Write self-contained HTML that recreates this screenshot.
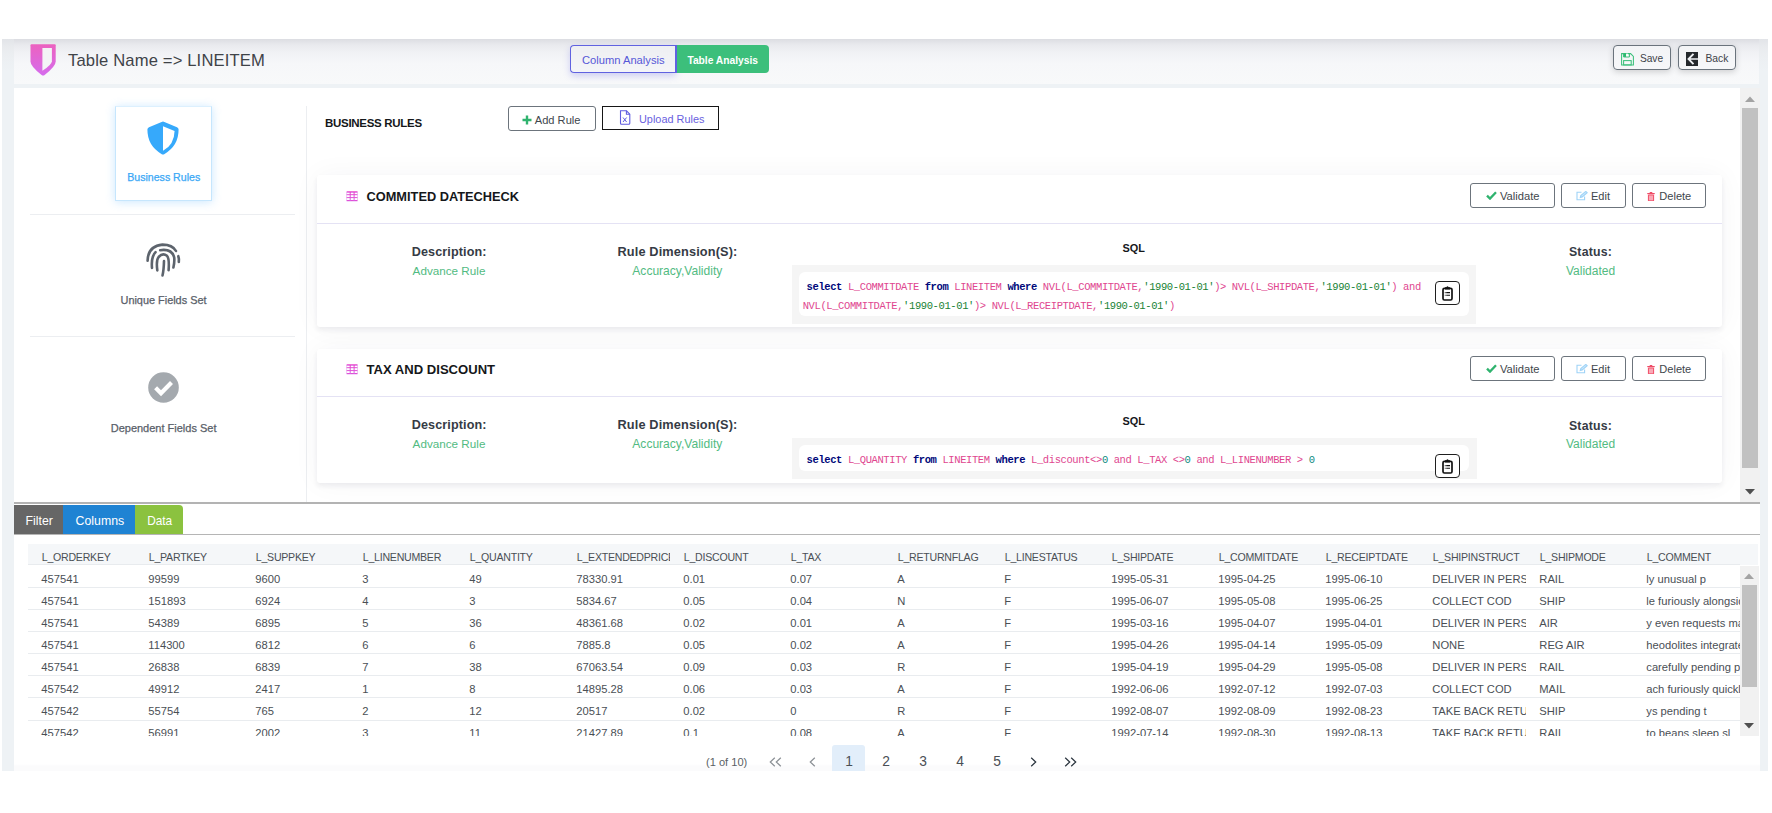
<!DOCTYPE html>
<html><head><meta charset="utf-8">
<style>
*{box-sizing:border-box;margin:0;padding:0}
html,body{width:1772px;height:813px;overflow:hidden;background:#fff;font-family:"Liberation Sans",sans-serif;color:#333}
.a{position:absolute}
.t{position:absolute;white-space:nowrap;line-height:1}
.k{color:#00087a;font-weight:bold}
.s{color:#178234}
.n{color:#0b8a80}
</style></head><body>
<div class="a" style="left:2.00px;top:39.00px;width:1766.00px;height:732.00px;background:linear-gradient(#e2e4e8 0px,#e9ebee 8px,#eceff2 18px,#eef2f5 32px,#eef2f5 100%)"></div>
<div class="a" style="left:14.00px;top:39.00px;width:1745.00px;height:45.00px;background:linear-gradient(#dcdde2 0px,#e9eaee 6px,#f1f2f5 14px,#f6f7f9 24px,#f8f9fa 100%)"></div>
<svg class="a" style="left:29px;top:44px" width="28" height="32" viewBox="0 0 28 32">
<defs><linearGradient id="pg" x1="0" y1="0" x2="0" y2="1"><stop offset="0" stop-color="#ec62bf"/><stop offset="1" stop-color="#d56ced"/></linearGradient></defs>
<path d="M1.5 1.2 Q1.5 0.3 2.4 0.3 H25.8 Q26.7 0.3 26.7 1.2 V17.5 Q26.7 22.5 15.6 30.9 Q14.1 32 12.6 30.9 Q1.5 22.5 1.5 17.5 Z" fill="url(#pg)"/>
<path d="M13.4 4 H22.9 V17.2 Q22.9 20.5 13.4 26.8 Z" fill="#f3f4f6"/>
</svg>
<div class="t" style="top:53px;font-size:16.6px;color:#3f4348;letter-spacing:0.15px;left:68.00px;">Table Name =&gt; LINEITEM</div>
<div class="a" style="left:570.00px;top:44.70px;width:106.00px;height:28.60px;border:1.6px solid #6062e0;border-right:none;border-radius:4px 0 0 4px;background:linear-gradient(#eeeff2,#f4f5f8);box-shadow:0 3px 7px rgba(96,98,224,.28)"></div>
<div class="a" style="left:676.00px;top:44.70px;width:93.00px;height:28.60px;background:#3cbf7b;border-radius:0 4px 4px 0"></div>
<div class="a" style="left:675.00px;top:44.70px;width:1.60px;height:28.60px;background:#6062e0"></div>
<div class="t" style="top:55px;font-size:11.2px;color:#5658d8;left:581.90px;">Column Analysis</div>
<div class="t" style="top:56px;font-size:10.25px;color:#ffffff;font-weight:bold;left:687.40px;">Table Analysis</div>
<div class="a" style="left:1612.60px;top:44.60px;width:58.10px;height:25.80px;border:1.6px solid #6a737c;border-radius:4px;background:linear-gradient(#f3f4f6,#f6f7f9);box-shadow:0 2px 6px rgba(0,0,0,.16)"></div>
<div class="a" style="left:1678.00px;top:44.60px;width:58.00px;height:25.80px;border:1.6px solid #6a737c;border-radius:4px;background:linear-gradient(#f3f4f6,#f6f7f9);box-shadow:0 2px 6px rgba(0,0,0,.16)"></div>
<svg class="a" style="left:1620.5px;top:53px" width="13" height="12.5" viewBox="0 0 13 12.5">
<path d="M0.6 0.6 H9.6 L12.4 3.4 V11.9 H0.6 Z" fill="none" stroke="#3cc07c" stroke-width="1.05"/>
<rect x="2.6" y="0.6" width="2.6" height="3.4" fill="#2eb86f"/>
<rect x="5.2" y="0.6" width="1.6" height="3.4" fill="#ffffff"/>
<path d="M2.6 0.6 V4 H8.4 V0.6" fill="none" stroke="#3cc07c" stroke-width="1"/>
<rect x="2.6" y="7.6" width="7.6" height="4.3" fill="none" stroke="#3cc07c" stroke-width="1.05"/>
</svg>
<div class="t" style="top:54px;font-size:10.2px;color:#3d4349;left:1639.90px;">Save</div>
<svg class="a" style="left:1686px;top:52px" width="12.5" height="14" viewBox="0 0 12.5 14">
<rect x="0" y="0" width="12" height="14" fill="#25292d"/>
<path d="M6.8 1.2 L1.2 7 L6.8 12.8 L8.2 11.6 L4.6 7.8 H12 V6.2 H4.6 L8.2 2.4 Z" fill="#eef0f3"/>
</svg>
<div class="t" style="top:54px;font-size:10.3px;color:#3d4349;left:1705.50px;">Back</div>
<div class="a" style="left:14.00px;top:88.00px;width:1726.00px;height:415.00px;background:#fff"></div>
<div class="a" style="left:114.80px;top:105.60px;width:97.20px;height:95.20px;border:1px solid #c6e6fd;border-top-color:#dcf0fe;background:#fff;box-shadow:0 1px 9px rgba(90,180,255,.32)"></div>
<svg class="a" style="left:147px;top:120.5px" width="32" height="34" viewBox="0 0 32 34">
<path d="M16 0.6 Q16.7 0.6 17.4 0.9 L30 6.2 Q31.6 6.9 31.6 8.6 Q31.6 25 17.2 33.2 Q16 33.8 14.8 33.2 Q0.4 25 0.4 8.6 Q0.4 6.9 2 6.2 L14.6 0.9 Q15.3 0.6 16 0.6 Z" fill="#36a9fb"/>
<path d="M16 5.2 L27.6 10 Q27.2 24 16 29.8 Z" fill="#fff"/>
</svg>
<div class="t" style="top:172px;font-size:10.6px;color:#3aa8f6;left:-136.30px;width:600px;text-align:center;-webkit-text-stroke:0.25px #3aa8f6">Business Rules</div>
<div class="a" style="left:30.00px;top:213.50px;width:265.00px;height:1.30px;background:#eceef1"></div>
<svg class="a" style="left:145px;top:242px" width="36" height="36" viewBox="0 0 36 36" fill="none" stroke="#5d646d" stroke-width="2.6" stroke-linecap="round">
<path d="M2.6 18.6 Q3 4 17.5 2.6 Q27.5 2.6 31 9"/>
<path d="M33.3 14.2 Q34.2 16.5 33.8 20"/>
<path d="M7 26 Q6.4 19 7.8 15 Q9 11.5 10.5 10.2"/>
<path d="M15.2 8.2 Q27 6.5 29.2 15.5 Q29.7 20 28.4 25.5"/>
<path d="M12.3 28.4 Q11 18 13.6 15 Q17.7 10.5 22 13.8 Q24.5 16.5 23.6 28.2"/>
<path d="M17.5 33.5 Q18.8 28 19 19"/>
</svg>
<div class="t" style="top:295px;font-size:10.9px;color:#596069;left:-136.50px;width:600px;text-align:center;-webkit-text-stroke:0.25px #596069">Unique Fields Set</div>
<div class="a" style="left:30.00px;top:336.00px;width:265.00px;height:1.30px;background:#eceef1"></div>
<svg class="a" style="left:148px;top:371.5px" width="31" height="31" viewBox="0 0 31 31">
<circle cx="15.5" cy="15.5" r="15.3" fill="#a4a9ae"/>
<path d="M7.6 15.8 L13 21.2 L23.5 10.6" fill="none" stroke="#fff" stroke-width="4.2" stroke-linejoin="miter"/>
</svg>
<div class="t" style="top:423px;font-size:11.0px;color:#596069;left:-136.40px;width:600px;text-align:center;-webkit-text-stroke:0.25px #596069">Dependent Fields Set</div>
<div class="a" style="left:306.20px;top:106.00px;width:1.20px;height:397.00px;background:#eceef1"></div>
<div class="t" style="top:118px;font-size:11.5px;color:#15171a;font-weight:bold;letter-spacing:-0.3px;left:325.00px;">BUSINESS RULES</div>
<div class="a" style="left:507.50px;top:106.10px;width:88.20px;height:24.50px;border:1.4px solid #6c747c;border-radius:3px;background:#fff"></div>
<svg class="a" style="left:522px;top:115px" width="10" height="10" viewBox="0 0 10 10"><path d="M5 0.5 V9.5 M0.5 5 H9.5" stroke="#2fb36e" stroke-width="2.4"/></svg>
<div class="t" style="top:115px;font-size:11.1px;color:#40464c;left:534.80px;">Add Rule</div>
<div class="a" style="left:602.30px;top:105.80px;width:116.70px;height:24.20px;border:1.7px solid #161616;background:#fff"></div>
<svg class="a" style="left:618.5px;top:110px" width="12" height="15" viewBox="0 0 12 15" fill="none" stroke="#5f5ce0" stroke-width="1.1"><path d="M1.5 0.8 H7.5 L10.8 4.2 V13.2 Q10.8 14.2 9.8 14.2 H2.5 Q1.5 14.2 1.5 13.2 Z"/><path d="M7.4 0.8 V4.3 H10.8"/><path d="M4 7.5 L7.6 12 M7.6 7.5 L4 12" stroke-width="1"/></svg>
<div class="t" style="top:114px;font-size:10.9px;color:#6a5fe0;left:639.00px;">Upload Rules</div>
<div class="a" style="left:317.00px;top:175.00px;width:1405.00px;height:152.00px;background:#fff;border-radius:3px;box-shadow:0 3px 5px rgba(40,40,70,.075),0 0 28px rgba(40,40,80,.045)"></div>
<div class="a" style="left:317.00px;top:223.00px;width:1405.00px;height:1.20px;background:#e4e2f4"></div>
<svg class="a" style="left:345.5px;top:190.7px" width="12.5" height="11" viewBox="0 0 12.5 11">
<defs><linearGradient id="tg190" x1="0" y1="0" x2="0" y2="1"><stop offset="0" stop-color="#ea3cc6"/><stop offset="1" stop-color="#d46ae9"/></linearGradient></defs>
<g fill="url(#tg190)">
<rect x="0.5" y="0.3" width="11.2" height="1.5" rx="0.6"/>
<rect x="0.5" y="3.2" width="11.2" height="1.0"/>
<rect x="0.5" y="6.1" width="11.2" height="1.0"/>
<rect x="0.5" y="9.0" width="11.2" height="1.2" rx="0.5"/>
<rect x="3.7" y="1" width="1" height="9"/>
<rect x="7.6" y="1" width="1" height="9"/>
</g>
<g fill="#e6a4ee" opacity="0.75"><rect x="0.3" y="1" width="0.8" height="8.8"/><rect x="11.1" y="1" width="0.8" height="8.8"/></g>
</svg>
<div class="t" style="top:191px;font-size:12.8px;color:#15171a;font-weight:bold;left:366.50px;">COMMITED DATECHECK</div>
<div class="a" style="left:1470.40px;top:183.40px;width:84.40px;height:24.40px;border:1.4px solid #6c747c;border-radius:3px;background:#fff"></div>
<div class="a" style="left:1561.30px;top:183.40px;width:64.30px;height:24.40px;border:1.4px solid #6c747c;border-radius:3px;background:#fff"></div>
<div class="a" style="left:1632.20px;top:183.40px;width:74.30px;height:24.40px;border:1.4px solid #6c747c;border-radius:3px;background:#fff"></div>
<svg class="a" style="left:1485.5px;top:191.20px" width="11" height="9" viewBox="0 0 11 9"><path d="M1 4.6 L4 7.6 L10 1.2" fill="none" stroke="#2fb36e" stroke-width="2.3"/></svg>
<div class="t" style="top:191px;font-size:11.2px;color:#40464c;left:1499.90px;">Validate</div>
<svg class="a" style="left:1576px;top:191.20px" width="12" height="9.5" viewBox="0 0 12 9.5" fill="none" stroke="#9fd3f7" stroke-width="1.1"><path d="M5.5 1.2 H1 V8.8 H8.6 V5.5"/><path d="M4.3 6.4 L4.8 4.6 L9.8 0.4 L11.2 1.7 L6.2 5.9 Z" fill="#cde9fc"/></svg>
<div class="t" style="top:191px;font-size:11.0px;color:#40464c;left:1591.00px;">Edit</div>
<svg class="a" style="left:1647.3px;top:191.50px" width="8" height="9.5" viewBox="0 0 8 9.5"><rect x="0.2" y="0.9" width="7.6" height="1.3" rx="0.4" fill="#ee4d67"/><rect x="2.6" y="0" width="2.8" height="1.2" rx="0.4" fill="#ee4d67"/><rect x="0.9" y="2.4" width="6.2" height="7" rx="1" fill="#f2566f"/><rect x="2" y="3.5" width="4" height="4.8" fill="#f9a9b6"/></svg>
<div class="t" style="top:191px;font-size:11.07px;color:#40464c;left:1659.30px;">Delete</div>
<div class="t" style="top:246px;font-size:12.6px;color:#363b45;font-weight:bold;letter-spacing:0.12px;left:149.20px;width:600px;text-align:center;">Description:</div>
<div class="t" style="top:265px;font-size:11.7px;color:#52bb82;left:149.00px;width:600px;text-align:center;">Advance Rule</div>
<div class="t" style="top:246px;font-size:12.75px;color:#363b45;font-weight:bold;letter-spacing:0.13px;left:377.50px;width:600px;text-align:center;">Rule Dimension(S):</div>
<div class="t" style="top:265px;font-size:12.05px;color:#52bb82;left:377.30px;width:600px;text-align:center;">Accuracy,Validity</div>
<div class="t" style="top:243px;font-size:10.9px;color:#15171a;font-weight:bold;left:833.80px;width:600px;text-align:center;">SQL</div>
<div class="t" style="top:246px;font-size:12.3px;color:#363b45;font-weight:bold;letter-spacing:0.2px;left:1290.50px;width:600px;text-align:center;">Status:</div>
<div class="t" style="top:265px;font-size:12.0px;color:#52bb82;left:1290.50px;width:600px;text-align:center;">Validated</div>
<div class="a" style="left:317.00px;top:349.00px;width:1405.00px;height:133.50px;background:#fff;border-radius:3px;box-shadow:0 3px 5px rgba(40,40,70,.075),0 0 28px rgba(40,40,80,.045)"></div>
<div class="a" style="left:317.00px;top:396.00px;width:1405.00px;height:1.20px;background:#e4e2f4"></div>
<svg class="a" style="left:345.5px;top:363.5px" width="12.5" height="11" viewBox="0 0 12.5 11">
<defs><linearGradient id="tg363" x1="0" y1="0" x2="0" y2="1"><stop offset="0" stop-color="#ea3cc6"/><stop offset="1" stop-color="#d46ae9"/></linearGradient></defs>
<g fill="url(#tg363)">
<rect x="0.5" y="0.3" width="11.2" height="1.5" rx="0.6"/>
<rect x="0.5" y="3.2" width="11.2" height="1.0"/>
<rect x="0.5" y="6.1" width="11.2" height="1.0"/>
<rect x="0.5" y="9.0" width="11.2" height="1.2" rx="0.5"/>
<rect x="3.7" y="1" width="1" height="9"/>
<rect x="7.6" y="1" width="1" height="9"/>
</g>
<g fill="#e6a4ee" opacity="0.75"><rect x="0.3" y="1" width="0.8" height="8.8"/><rect x="11.1" y="1" width="0.8" height="8.8"/></g>
</svg>
<div class="t" style="top:363px;font-size:13.08px;color:#15171a;font-weight:bold;left:366.50px;">TAX AND DISCOUNT</div>
<div class="a" style="left:1470.40px;top:356.40px;width:84.40px;height:24.40px;border:1.4px solid #6c747c;border-radius:3px;background:#fff"></div>
<div class="a" style="left:1561.30px;top:356.40px;width:64.30px;height:24.40px;border:1.4px solid #6c747c;border-radius:3px;background:#fff"></div>
<div class="a" style="left:1632.20px;top:356.40px;width:74.30px;height:24.40px;border:1.4px solid #6c747c;border-radius:3px;background:#fff"></div>
<svg class="a" style="left:1485.5px;top:364.20px" width="11" height="9" viewBox="0 0 11 9"><path d="M1 4.6 L4 7.6 L10 1.2" fill="none" stroke="#2fb36e" stroke-width="2.3"/></svg>
<div class="t" style="top:364px;font-size:11.2px;color:#40464c;left:1499.90px;">Validate</div>
<svg class="a" style="left:1576px;top:364.20px" width="12" height="9.5" viewBox="0 0 12 9.5" fill="none" stroke="#9fd3f7" stroke-width="1.1"><path d="M5.5 1.2 H1 V8.8 H8.6 V5.5"/><path d="M4.3 6.4 L4.8 4.6 L9.8 0.4 L11.2 1.7 L6.2 5.9 Z" fill="#cde9fc"/></svg>
<div class="t" style="top:364px;font-size:11.0px;color:#40464c;left:1591.00px;">Edit</div>
<svg class="a" style="left:1647.3px;top:364.50px" width="8" height="9.5" viewBox="0 0 8 9.5"><rect x="0.2" y="0.9" width="7.6" height="1.3" rx="0.4" fill="#ee4d67"/><rect x="2.6" y="0" width="2.8" height="1.2" rx="0.4" fill="#ee4d67"/><rect x="0.9" y="2.4" width="6.2" height="7" rx="1" fill="#f2566f"/><rect x="2" y="3.5" width="4" height="4.8" fill="#f9a9b6"/></svg>
<div class="t" style="top:364px;font-size:11.07px;color:#40464c;left:1659.30px;">Delete</div>
<div class="t" style="top:419px;font-size:12.6px;color:#363b45;font-weight:bold;letter-spacing:0.12px;left:149.20px;width:600px;text-align:center;">Description:</div>
<div class="t" style="top:438px;font-size:11.7px;color:#52bb82;left:149.00px;width:600px;text-align:center;">Advance Rule</div>
<div class="t" style="top:419px;font-size:12.75px;color:#363b45;font-weight:bold;letter-spacing:0.13px;left:377.50px;width:600px;text-align:center;">Rule Dimension(S):</div>
<div class="t" style="top:438px;font-size:12.05px;color:#52bb82;left:377.30px;width:600px;text-align:center;">Accuracy,Validity</div>
<div class="t" style="top:416px;font-size:10.9px;color:#15171a;font-weight:bold;left:833.80px;width:600px;text-align:center;">SQL</div>
<div class="t" style="top:420px;font-size:12.3px;color:#363b45;font-weight:bold;letter-spacing:0.2px;left:1290.50px;width:600px;text-align:center;">Status:</div>
<div class="t" style="top:438px;font-size:12.0px;color:#52bb82;left:1290.50px;width:600px;text-align:center;">Validated</div>
<div class="a" style="left:791.80px;top:265.00px;width:684.40px;height:59.00px;background:#f5f5f5"></div>
<div class="a" style="left:799.00px;top:272.40px;width:670.00px;height:43.60px;background:#fff;border-radius:6px"></div>
<div class="a" style="left:1435.00px;top:281.00px;width:25.00px;height:24.00px;border:1.4px solid #1f1f1f;border-radius:4px;background:#fff"></div>
<svg class="a" style="left:1442px;top:284.6px" width="11" height="16" viewBox="0 0 11 16">
<rect x="1" y="3.4" width="9" height="11.6" rx="1.4" fill="none" stroke="#111" stroke-width="1.7"/>
<path d="M3 2.2 H4.3 Q5.5 0.2 6.7 2.2 H8 V4.6 H3 Z" fill="#111"/>
<path d="M4.2 7.6 H8 M4.2 10.3 H8" stroke="#111" stroke-width="1.1"/>
<path d="M2.8 7.6 H3.6 M2.8 10.3 H3.6" stroke="#111" stroke-width="1.1"/>
</svg>
<div class="a" style="left:791.50px;top:438.20px;width:685.10px;height:40.50px;background:#f5f5f5"></div>
<div class="a" style="left:799.00px;top:445.20px;width:670.30px;height:26.10px;background:#fff;border-radius:6px"></div>
<div class="a" style="left:1435.00px;top:454.00px;width:25.00px;height:24.00px;border:1.4px solid #1f1f1f;border-radius:4px;background:#fff"></div>
<svg class="a" style="left:1442px;top:457.6px" width="11" height="16" viewBox="0 0 11 16">
<rect x="1" y="3.4" width="9" height="11.6" rx="1.4" fill="none" stroke="#111" stroke-width="1.7"/>
<path d="M3 2.2 H4.3 Q5.5 0.2 6.7 2.2 H8 V4.6 H3 Z" fill="#111"/>
<path d="M4.2 7.6 H8 M4.2 10.3 H8" stroke="#111" stroke-width="1.1"/>
<path d="M2.8 7.6 H3.6 M2.8 10.3 H3.6" stroke="#111" stroke-width="1.1"/>
</svg>
<div class="t" style="top:282px;font-size:10.5px;color:#e0468f;font-family:'Liberation Mono',monospace;letter-spacing:-0.395px;left:806.60px;white-space:pre"><b class="k">select</b> L_COMMITDATE <b class="k">from</b> LINEITEM <b class="k">where</b> NVL(L_COMMITDATE,<span class="s">'1990-01-01'</span>)&gt; NVL(L_SHIPDATE,<span class="s">'1990-01-01'</span>) and</div>
<div class="t" style="top:301px;font-size:10.5px;color:#e0468f;font-family:'Liberation Mono',monospace;letter-spacing:-0.395px;left:802.70px;white-space:pre">NVL(L_COMMITDATE,<span class="s">'1990-01-01'</span>)&gt; NVL(L_RECEIPTDATE,<span class="s">'1990-01-01'</span>)</div>
<div class="t" style="top:455px;font-size:10.5px;color:#e0468f;font-family:'Liberation Mono',monospace;letter-spacing:-0.395px;left:806.60px;white-space:pre"><b class="k">select</b> L_QUANTITY <b class="k">from</b> LINEITEM <b class="k">where</b> L_discount&lt;&gt;<span class="n">0</span> and L_TAX &lt;&gt;<span class="n">0</span> and L_LINENUMBER &gt; <span class="n">0</span></div>
<div class="a" style="left:1740.00px;top:88.00px;width:19.50px;height:415.00px;background:#f1f1f1"></div>
<div class="a" style="left:1742.00px;top:108.00px;width:16.00px;height:359.60px;background:#c1c1c1"></div>
<svg class="a" style="left:1745px;top:95.5px" width="10" height="6" viewBox="0 0 10 6"><path d="M0 6 L5 0.5 L10 6 Z" fill="#a3a3a3"/></svg>
<svg class="a" style="left:1745px;top:488.5px" width="10" height="6" viewBox="0 0 10 6"><path d="M0 0 L5 5.5 L10 0 Z" fill="#505050"/></svg>
<div class="a" style="left:14.00px;top:503.00px;width:1745.50px;height:268.00px;background:#fff"></div>
<div class="a" style="left:14.00px;top:502.30px;width:1745.50px;height:1.40px;background:#b3b3b3"></div>
<div class="a" style="left:14.00px;top:505.20px;width:49.30px;height:29.30px;background:#666666"></div>
<div class="a" style="left:63.30px;top:505.20px;width:71.70px;height:29.30px;background:#1f83d3"></div>
<div class="a" style="left:135.00px;top:505.20px;width:48.00px;height:29.30px;background:#8bc23f;border-radius:0 4px 0 0"></div>
<div class="a" style="left:14.00px;top:533.80px;width:1745.50px;height:1.40px;background:#b5b5b5"></div>
<div class="t" style="top:515px;font-size:12.3px;color:#ffffff;left:25.50px;">Filter</div>
<div class="t" style="top:515px;font-size:12.3px;color:#ffffff;left:75.60px;">Columns</div>
<div class="t" style="top:516px;font-size:11.85px;color:#ffffff;left:147.20px;">Data</div>
<div class="a" style="left:28.00px;top:543.80px;width:1729.50px;height:21.00px;background:#f5f7f9"></div>
<div class="a" style="left:28.00px;top:564.00px;width:1712.00px;height:1.20px;background:#e8ebee"></div>
<div class="a" style="left:28.00px;top:544px;width:107px;height:21px;overflow:hidden"><div class="t" style="top:8px;font-size:10.6px;color:#4a4f55;letter-spacing:-0.25px;left:13.80px;">L_ORDERKEY</div>
</div>
<div class="a" style="left:135.00px;top:544px;width:107px;height:21px;overflow:hidden"><div class="t" style="top:8px;font-size:10.6px;color:#4a4f55;letter-spacing:-0.25px;left:13.80px;">L_PARTKEY</div>
</div>
<div class="a" style="left:242.00px;top:544px;width:107px;height:21px;overflow:hidden"><div class="t" style="top:8px;font-size:10.6px;color:#4a4f55;letter-spacing:-0.25px;left:13.80px;">L_SUPPKEY</div>
</div>
<div class="a" style="left:349.00px;top:544px;width:107px;height:21px;overflow:hidden"><div class="t" style="top:8px;font-size:10.6px;color:#4a4f55;letter-spacing:-0.25px;left:13.80px;">L_LINENUMBER</div>
</div>
<div class="a" style="left:456.00px;top:544px;width:107px;height:21px;overflow:hidden"><div class="t" style="top:8px;font-size:10.6px;color:#4a4f55;letter-spacing:-0.25px;left:13.80px;">L_QUANTITY</div>
</div>
<div class="a" style="left:563.00px;top:544px;width:107px;height:21px;overflow:hidden"><div class="t" style="top:8px;font-size:10.6px;color:#4a4f55;letter-spacing:-0.25px;left:13.80px;">L_EXTENDEDPRICE</div>
</div>
<div class="a" style="left:670.00px;top:544px;width:107px;height:21px;overflow:hidden"><div class="t" style="top:8px;font-size:10.6px;color:#4a4f55;letter-spacing:-0.25px;left:13.80px;">L_DISCOUNT</div>
</div>
<div class="a" style="left:777.00px;top:544px;width:107px;height:21px;overflow:hidden"><div class="t" style="top:8px;font-size:10.6px;color:#4a4f55;letter-spacing:-0.25px;left:13.80px;">L_TAX</div>
</div>
<div class="a" style="left:884.00px;top:544px;width:107px;height:21px;overflow:hidden"><div class="t" style="top:8px;font-size:10.6px;color:#4a4f55;letter-spacing:-0.25px;left:13.80px;">L_RETURNFLAG</div>
</div>
<div class="a" style="left:991.00px;top:544px;width:107px;height:21px;overflow:hidden"><div class="t" style="top:8px;font-size:10.6px;color:#4a4f55;letter-spacing:-0.25px;left:13.80px;">L_LINESTATUS</div>
</div>
<div class="a" style="left:1098.00px;top:544px;width:107px;height:21px;overflow:hidden"><div class="t" style="top:8px;font-size:10.6px;color:#4a4f55;letter-spacing:-0.25px;left:13.80px;">L_SHIPDATE</div>
</div>
<div class="a" style="left:1205.00px;top:544px;width:107px;height:21px;overflow:hidden"><div class="t" style="top:8px;font-size:10.6px;color:#4a4f55;letter-spacing:-0.25px;left:13.80px;">L_COMMITDATE</div>
</div>
<div class="a" style="left:1312.00px;top:544px;width:107px;height:21px;overflow:hidden"><div class="t" style="top:8px;font-size:10.6px;color:#4a4f55;letter-spacing:-0.25px;left:13.80px;">L_RECEIPTDATE</div>
</div>
<div class="a" style="left:1419.00px;top:544px;width:107px;height:21px;overflow:hidden"><div class="t" style="top:8px;font-size:10.6px;color:#4a4f55;letter-spacing:-0.25px;left:13.80px;">L_SHIPINSTRUCT</div>
</div>
<div class="a" style="left:1526.00px;top:544px;width:107px;height:21px;overflow:hidden"><div class="t" style="top:8px;font-size:10.6px;color:#4a4f55;letter-spacing:-0.25px;left:13.80px;">L_SHIPMODE</div>
</div>
<div class="a" style="left:1633.00px;top:544px;width:107px;height:21px;overflow:hidden"><div class="t" style="top:8px;font-size:10.6px;color:#4a4f55;letter-spacing:-0.25px;left:13.80px;">L_COMMENT</div>
</div>
<div class="a" style="left:28px;top:565px;width:1711.5px;height:170.6px;overflow:hidden">
<div class="a" style="left:0.00px;top:22.00px;width:1711.50px;height:1.00px;background:#e9ecef"></div>
<div class="a" style="left:0.00px;top:2px;width:107px;height:22px;overflow:hidden"><div class="t" style="top:7px;font-size:11.2px;color:#4a4f55;left:13.30px;">457541</div>
</div>
<div class="a" style="left:107.00px;top:2px;width:107px;height:22px;overflow:hidden"><div class="t" style="top:7px;font-size:11.2px;color:#4a4f55;left:13.30px;">99599</div>
</div>
<div class="a" style="left:214.00px;top:2px;width:107px;height:22px;overflow:hidden"><div class="t" style="top:7px;font-size:11.2px;color:#4a4f55;left:13.30px;">9600</div>
</div>
<div class="a" style="left:321.00px;top:2px;width:107px;height:22px;overflow:hidden"><div class="t" style="top:7px;font-size:11.2px;color:#4a4f55;left:13.30px;">3</div>
</div>
<div class="a" style="left:428.00px;top:2px;width:107px;height:22px;overflow:hidden"><div class="t" style="top:7px;font-size:11.2px;color:#4a4f55;left:13.30px;">49</div>
</div>
<div class="a" style="left:535.00px;top:2px;width:107px;height:22px;overflow:hidden"><div class="t" style="top:7px;font-size:11.2px;color:#4a4f55;left:13.30px;">78330.91</div>
</div>
<div class="a" style="left:642.00px;top:2px;width:107px;height:22px;overflow:hidden"><div class="t" style="top:7px;font-size:11.2px;color:#4a4f55;left:13.30px;">0.01</div>
</div>
<div class="a" style="left:749.00px;top:2px;width:107px;height:22px;overflow:hidden"><div class="t" style="top:7px;font-size:11.2px;color:#4a4f55;left:13.30px;">0.07</div>
</div>
<div class="a" style="left:856.00px;top:2px;width:107px;height:22px;overflow:hidden"><div class="t" style="top:7px;font-size:11.2px;color:#4a4f55;left:13.30px;">A</div>
</div>
<div class="a" style="left:963.00px;top:2px;width:107px;height:22px;overflow:hidden"><div class="t" style="top:7px;font-size:11.2px;color:#4a4f55;left:13.30px;">F</div>
</div>
<div class="a" style="left:1070.00px;top:2px;width:107px;height:22px;overflow:hidden"><div class="t" style="top:7px;font-size:11.2px;color:#4a4f55;left:13.30px;">1995-05-31</div>
</div>
<div class="a" style="left:1177.00px;top:2px;width:107px;height:22px;overflow:hidden"><div class="t" style="top:7px;font-size:11.2px;color:#4a4f55;left:13.30px;">1995-04-25</div>
</div>
<div class="a" style="left:1284.00px;top:2px;width:107px;height:22px;overflow:hidden"><div class="t" style="top:7px;font-size:11.2px;color:#4a4f55;left:13.30px;">1995-06-10</div>
</div>
<div class="a" style="left:1391.00px;top:2px;width:107px;height:22px;overflow:hidden"><div class="t" style="top:7px;font-size:11.2px;color:#4a4f55;left:13.30px;">DELIVER IN PERSON</div>
</div>
<div class="a" style="left:1498.00px;top:2px;width:107px;height:22px;overflow:hidden"><div class="t" style="top:7px;font-size:11.2px;color:#4a4f55;left:13.30px;">RAIL</div>
</div>
<div class="a" style="left:1605.00px;top:2px;width:107px;height:22px;overflow:hidden"><div class="t" style="top:7px;font-size:11.2px;color:#4a4f55;left:13.30px;">ly unusual p</div>
</div>
<div class="a" style="left:0.00px;top:44.00px;width:1711.50px;height:1.00px;background:#e9ecef"></div>
<div class="a" style="left:0.00px;top:24px;width:107px;height:22px;overflow:hidden"><div class="t" style="top:7px;font-size:11.2px;color:#4a4f55;left:13.30px;">457541</div>
</div>
<div class="a" style="left:107.00px;top:24px;width:107px;height:22px;overflow:hidden"><div class="t" style="top:7px;font-size:11.2px;color:#4a4f55;left:13.30px;">151893</div>
</div>
<div class="a" style="left:214.00px;top:24px;width:107px;height:22px;overflow:hidden"><div class="t" style="top:7px;font-size:11.2px;color:#4a4f55;left:13.30px;">6924</div>
</div>
<div class="a" style="left:321.00px;top:24px;width:107px;height:22px;overflow:hidden"><div class="t" style="top:7px;font-size:11.2px;color:#4a4f55;left:13.30px;">4</div>
</div>
<div class="a" style="left:428.00px;top:24px;width:107px;height:22px;overflow:hidden"><div class="t" style="top:7px;font-size:11.2px;color:#4a4f55;left:13.30px;">3</div>
</div>
<div class="a" style="left:535.00px;top:24px;width:107px;height:22px;overflow:hidden"><div class="t" style="top:7px;font-size:11.2px;color:#4a4f55;left:13.30px;">5834.67</div>
</div>
<div class="a" style="left:642.00px;top:24px;width:107px;height:22px;overflow:hidden"><div class="t" style="top:7px;font-size:11.2px;color:#4a4f55;left:13.30px;">0.05</div>
</div>
<div class="a" style="left:749.00px;top:24px;width:107px;height:22px;overflow:hidden"><div class="t" style="top:7px;font-size:11.2px;color:#4a4f55;left:13.30px;">0.04</div>
</div>
<div class="a" style="left:856.00px;top:24px;width:107px;height:22px;overflow:hidden"><div class="t" style="top:7px;font-size:11.2px;color:#4a4f55;left:13.30px;">N</div>
</div>
<div class="a" style="left:963.00px;top:24px;width:107px;height:22px;overflow:hidden"><div class="t" style="top:7px;font-size:11.2px;color:#4a4f55;left:13.30px;">F</div>
</div>
<div class="a" style="left:1070.00px;top:24px;width:107px;height:22px;overflow:hidden"><div class="t" style="top:7px;font-size:11.2px;color:#4a4f55;left:13.30px;">1995-06-07</div>
</div>
<div class="a" style="left:1177.00px;top:24px;width:107px;height:22px;overflow:hidden"><div class="t" style="top:7px;font-size:11.2px;color:#4a4f55;left:13.30px;">1995-05-08</div>
</div>
<div class="a" style="left:1284.00px;top:24px;width:107px;height:22px;overflow:hidden"><div class="t" style="top:7px;font-size:11.2px;color:#4a4f55;left:13.30px;">1995-06-25</div>
</div>
<div class="a" style="left:1391.00px;top:24px;width:107px;height:22px;overflow:hidden"><div class="t" style="top:7px;font-size:11.2px;color:#4a4f55;left:13.30px;">COLLECT COD</div>
</div>
<div class="a" style="left:1498.00px;top:24px;width:107px;height:22px;overflow:hidden"><div class="t" style="top:7px;font-size:11.2px;color:#4a4f55;left:13.30px;">SHIP</div>
</div>
<div class="a" style="left:1605.00px;top:24px;width:107px;height:22px;overflow:hidden"><div class="t" style="top:7px;font-size:11.2px;color:#4a4f55;left:13.30px;">le furiously alongside</div>
</div>
<div class="a" style="left:0.00px;top:66.00px;width:1711.50px;height:1.00px;background:#e9ecef"></div>
<div class="a" style="left:0.00px;top:46px;width:107px;height:22px;overflow:hidden"><div class="t" style="top:7px;font-size:11.2px;color:#4a4f55;left:13.30px;">457541</div>
</div>
<div class="a" style="left:107.00px;top:46px;width:107px;height:22px;overflow:hidden"><div class="t" style="top:7px;font-size:11.2px;color:#4a4f55;left:13.30px;">54389</div>
</div>
<div class="a" style="left:214.00px;top:46px;width:107px;height:22px;overflow:hidden"><div class="t" style="top:7px;font-size:11.2px;color:#4a4f55;left:13.30px;">6895</div>
</div>
<div class="a" style="left:321.00px;top:46px;width:107px;height:22px;overflow:hidden"><div class="t" style="top:7px;font-size:11.2px;color:#4a4f55;left:13.30px;">5</div>
</div>
<div class="a" style="left:428.00px;top:46px;width:107px;height:22px;overflow:hidden"><div class="t" style="top:7px;font-size:11.2px;color:#4a4f55;left:13.30px;">36</div>
</div>
<div class="a" style="left:535.00px;top:46px;width:107px;height:22px;overflow:hidden"><div class="t" style="top:7px;font-size:11.2px;color:#4a4f55;left:13.30px;">48361.68</div>
</div>
<div class="a" style="left:642.00px;top:46px;width:107px;height:22px;overflow:hidden"><div class="t" style="top:7px;font-size:11.2px;color:#4a4f55;left:13.30px;">0.02</div>
</div>
<div class="a" style="left:749.00px;top:46px;width:107px;height:22px;overflow:hidden"><div class="t" style="top:7px;font-size:11.2px;color:#4a4f55;left:13.30px;">0.01</div>
</div>
<div class="a" style="left:856.00px;top:46px;width:107px;height:22px;overflow:hidden"><div class="t" style="top:7px;font-size:11.2px;color:#4a4f55;left:13.30px;">A</div>
</div>
<div class="a" style="left:963.00px;top:46px;width:107px;height:22px;overflow:hidden"><div class="t" style="top:7px;font-size:11.2px;color:#4a4f55;left:13.30px;">F</div>
</div>
<div class="a" style="left:1070.00px;top:46px;width:107px;height:22px;overflow:hidden"><div class="t" style="top:7px;font-size:11.2px;color:#4a4f55;left:13.30px;">1995-03-16</div>
</div>
<div class="a" style="left:1177.00px;top:46px;width:107px;height:22px;overflow:hidden"><div class="t" style="top:7px;font-size:11.2px;color:#4a4f55;left:13.30px;">1995-04-07</div>
</div>
<div class="a" style="left:1284.00px;top:46px;width:107px;height:22px;overflow:hidden"><div class="t" style="top:7px;font-size:11.2px;color:#4a4f55;left:13.30px;">1995-04-01</div>
</div>
<div class="a" style="left:1391.00px;top:46px;width:107px;height:22px;overflow:hidden"><div class="t" style="top:7px;font-size:11.2px;color:#4a4f55;left:13.30px;">DELIVER IN PERSON</div>
</div>
<div class="a" style="left:1498.00px;top:46px;width:107px;height:22px;overflow:hidden"><div class="t" style="top:7px;font-size:11.2px;color:#4a4f55;left:13.30px;">AIR</div>
</div>
<div class="a" style="left:1605.00px;top:46px;width:107px;height:22px;overflow:hidden"><div class="t" style="top:7px;font-size:11.2px;color:#4a4f55;left:13.30px;">y even requests may</div>
</div>
<div class="a" style="left:0.00px;top:88.00px;width:1711.50px;height:1.00px;background:#e9ecef"></div>
<div class="a" style="left:0.00px;top:68px;width:107px;height:22px;overflow:hidden"><div class="t" style="top:7px;font-size:11.2px;color:#4a4f55;left:13.30px;">457541</div>
</div>
<div class="a" style="left:107.00px;top:68px;width:107px;height:22px;overflow:hidden"><div class="t" style="top:7px;font-size:11.2px;color:#4a4f55;left:13.30px;">114300</div>
</div>
<div class="a" style="left:214.00px;top:68px;width:107px;height:22px;overflow:hidden"><div class="t" style="top:7px;font-size:11.2px;color:#4a4f55;left:13.30px;">6812</div>
</div>
<div class="a" style="left:321.00px;top:68px;width:107px;height:22px;overflow:hidden"><div class="t" style="top:7px;font-size:11.2px;color:#4a4f55;left:13.30px;">6</div>
</div>
<div class="a" style="left:428.00px;top:68px;width:107px;height:22px;overflow:hidden"><div class="t" style="top:7px;font-size:11.2px;color:#4a4f55;left:13.30px;">6</div>
</div>
<div class="a" style="left:535.00px;top:68px;width:107px;height:22px;overflow:hidden"><div class="t" style="top:7px;font-size:11.2px;color:#4a4f55;left:13.30px;">7885.8</div>
</div>
<div class="a" style="left:642.00px;top:68px;width:107px;height:22px;overflow:hidden"><div class="t" style="top:7px;font-size:11.2px;color:#4a4f55;left:13.30px;">0.05</div>
</div>
<div class="a" style="left:749.00px;top:68px;width:107px;height:22px;overflow:hidden"><div class="t" style="top:7px;font-size:11.2px;color:#4a4f55;left:13.30px;">0.02</div>
</div>
<div class="a" style="left:856.00px;top:68px;width:107px;height:22px;overflow:hidden"><div class="t" style="top:7px;font-size:11.2px;color:#4a4f55;left:13.30px;">A</div>
</div>
<div class="a" style="left:963.00px;top:68px;width:107px;height:22px;overflow:hidden"><div class="t" style="top:7px;font-size:11.2px;color:#4a4f55;left:13.30px;">F</div>
</div>
<div class="a" style="left:1070.00px;top:68px;width:107px;height:22px;overflow:hidden"><div class="t" style="top:7px;font-size:11.2px;color:#4a4f55;left:13.30px;">1995-04-26</div>
</div>
<div class="a" style="left:1177.00px;top:68px;width:107px;height:22px;overflow:hidden"><div class="t" style="top:7px;font-size:11.2px;color:#4a4f55;left:13.30px;">1995-04-14</div>
</div>
<div class="a" style="left:1284.00px;top:68px;width:107px;height:22px;overflow:hidden"><div class="t" style="top:7px;font-size:11.2px;color:#4a4f55;left:13.30px;">1995-05-09</div>
</div>
<div class="a" style="left:1391.00px;top:68px;width:107px;height:22px;overflow:hidden"><div class="t" style="top:7px;font-size:11.2px;color:#4a4f55;left:13.30px;">NONE</div>
</div>
<div class="a" style="left:1498.00px;top:68px;width:107px;height:22px;overflow:hidden"><div class="t" style="top:7px;font-size:11.2px;color:#4a4f55;left:13.30px;">REG AIR</div>
</div>
<div class="a" style="left:1605.00px;top:68px;width:107px;height:22px;overflow:hidden"><div class="t" style="top:7px;font-size:11.2px;color:#4a4f55;left:13.30px;">heodolites integrate</div>
</div>
<div class="a" style="left:0.00px;top:110.00px;width:1711.50px;height:1.00px;background:#e9ecef"></div>
<div class="a" style="left:0.00px;top:90px;width:107px;height:22px;overflow:hidden"><div class="t" style="top:7px;font-size:11.2px;color:#4a4f55;left:13.30px;">457541</div>
</div>
<div class="a" style="left:107.00px;top:90px;width:107px;height:22px;overflow:hidden"><div class="t" style="top:7px;font-size:11.2px;color:#4a4f55;left:13.30px;">26838</div>
</div>
<div class="a" style="left:214.00px;top:90px;width:107px;height:22px;overflow:hidden"><div class="t" style="top:7px;font-size:11.2px;color:#4a4f55;left:13.30px;">6839</div>
</div>
<div class="a" style="left:321.00px;top:90px;width:107px;height:22px;overflow:hidden"><div class="t" style="top:7px;font-size:11.2px;color:#4a4f55;left:13.30px;">7</div>
</div>
<div class="a" style="left:428.00px;top:90px;width:107px;height:22px;overflow:hidden"><div class="t" style="top:7px;font-size:11.2px;color:#4a4f55;left:13.30px;">38</div>
</div>
<div class="a" style="left:535.00px;top:90px;width:107px;height:22px;overflow:hidden"><div class="t" style="top:7px;font-size:11.2px;color:#4a4f55;left:13.30px;">67063.54</div>
</div>
<div class="a" style="left:642.00px;top:90px;width:107px;height:22px;overflow:hidden"><div class="t" style="top:7px;font-size:11.2px;color:#4a4f55;left:13.30px;">0.09</div>
</div>
<div class="a" style="left:749.00px;top:90px;width:107px;height:22px;overflow:hidden"><div class="t" style="top:7px;font-size:11.2px;color:#4a4f55;left:13.30px;">0.03</div>
</div>
<div class="a" style="left:856.00px;top:90px;width:107px;height:22px;overflow:hidden"><div class="t" style="top:7px;font-size:11.2px;color:#4a4f55;left:13.30px;">R</div>
</div>
<div class="a" style="left:963.00px;top:90px;width:107px;height:22px;overflow:hidden"><div class="t" style="top:7px;font-size:11.2px;color:#4a4f55;left:13.30px;">F</div>
</div>
<div class="a" style="left:1070.00px;top:90px;width:107px;height:22px;overflow:hidden"><div class="t" style="top:7px;font-size:11.2px;color:#4a4f55;left:13.30px;">1995-04-19</div>
</div>
<div class="a" style="left:1177.00px;top:90px;width:107px;height:22px;overflow:hidden"><div class="t" style="top:7px;font-size:11.2px;color:#4a4f55;left:13.30px;">1995-04-29</div>
</div>
<div class="a" style="left:1284.00px;top:90px;width:107px;height:22px;overflow:hidden"><div class="t" style="top:7px;font-size:11.2px;color:#4a4f55;left:13.30px;">1995-05-08</div>
</div>
<div class="a" style="left:1391.00px;top:90px;width:107px;height:22px;overflow:hidden"><div class="t" style="top:7px;font-size:11.2px;color:#4a4f55;left:13.30px;">DELIVER IN PERSON</div>
</div>
<div class="a" style="left:1498.00px;top:90px;width:107px;height:22px;overflow:hidden"><div class="t" style="top:7px;font-size:11.2px;color:#4a4f55;left:13.30px;">RAIL</div>
</div>
<div class="a" style="left:1605.00px;top:90px;width:107px;height:22px;overflow:hidden"><div class="t" style="top:7px;font-size:11.2px;color:#4a4f55;left:13.30px;">carefully pending p</div>
</div>
<div class="a" style="left:0.00px;top:132.00px;width:1711.50px;height:1.00px;background:#e9ecef"></div>
<div class="a" style="left:0.00px;top:112px;width:107px;height:22px;overflow:hidden"><div class="t" style="top:7px;font-size:11.2px;color:#4a4f55;left:13.30px;">457542</div>
</div>
<div class="a" style="left:107.00px;top:112px;width:107px;height:22px;overflow:hidden"><div class="t" style="top:7px;font-size:11.2px;color:#4a4f55;left:13.30px;">49912</div>
</div>
<div class="a" style="left:214.00px;top:112px;width:107px;height:22px;overflow:hidden"><div class="t" style="top:7px;font-size:11.2px;color:#4a4f55;left:13.30px;">2417</div>
</div>
<div class="a" style="left:321.00px;top:112px;width:107px;height:22px;overflow:hidden"><div class="t" style="top:7px;font-size:11.2px;color:#4a4f55;left:13.30px;">1</div>
</div>
<div class="a" style="left:428.00px;top:112px;width:107px;height:22px;overflow:hidden"><div class="t" style="top:7px;font-size:11.2px;color:#4a4f55;left:13.30px;">8</div>
</div>
<div class="a" style="left:535.00px;top:112px;width:107px;height:22px;overflow:hidden"><div class="t" style="top:7px;font-size:11.2px;color:#4a4f55;left:13.30px;">14895.28</div>
</div>
<div class="a" style="left:642.00px;top:112px;width:107px;height:22px;overflow:hidden"><div class="t" style="top:7px;font-size:11.2px;color:#4a4f55;left:13.30px;">0.06</div>
</div>
<div class="a" style="left:749.00px;top:112px;width:107px;height:22px;overflow:hidden"><div class="t" style="top:7px;font-size:11.2px;color:#4a4f55;left:13.30px;">0.03</div>
</div>
<div class="a" style="left:856.00px;top:112px;width:107px;height:22px;overflow:hidden"><div class="t" style="top:7px;font-size:11.2px;color:#4a4f55;left:13.30px;">A</div>
</div>
<div class="a" style="left:963.00px;top:112px;width:107px;height:22px;overflow:hidden"><div class="t" style="top:7px;font-size:11.2px;color:#4a4f55;left:13.30px;">F</div>
</div>
<div class="a" style="left:1070.00px;top:112px;width:107px;height:22px;overflow:hidden"><div class="t" style="top:7px;font-size:11.2px;color:#4a4f55;left:13.30px;">1992-06-06</div>
</div>
<div class="a" style="left:1177.00px;top:112px;width:107px;height:22px;overflow:hidden"><div class="t" style="top:7px;font-size:11.2px;color:#4a4f55;left:13.30px;">1992-07-12</div>
</div>
<div class="a" style="left:1284.00px;top:112px;width:107px;height:22px;overflow:hidden"><div class="t" style="top:7px;font-size:11.2px;color:#4a4f55;left:13.30px;">1992-07-03</div>
</div>
<div class="a" style="left:1391.00px;top:112px;width:107px;height:22px;overflow:hidden"><div class="t" style="top:7px;font-size:11.2px;color:#4a4f55;left:13.30px;">COLLECT COD</div>
</div>
<div class="a" style="left:1498.00px;top:112px;width:107px;height:22px;overflow:hidden"><div class="t" style="top:7px;font-size:11.2px;color:#4a4f55;left:13.30px;">MAIL</div>
</div>
<div class="a" style="left:1605.00px;top:112px;width:107px;height:22px;overflow:hidden"><div class="t" style="top:7px;font-size:11.2px;color:#4a4f55;left:13.30px;">ach furiously quickly</div>
</div>
<div class="a" style="left:0.00px;top:154.60px;width:1711.50px;height:1.00px;background:#e9ecef"></div>
<div class="a" style="left:0.00px;top:134px;width:107px;height:22px;overflow:hidden"><div class="t" style="top:7px;font-size:11.2px;color:#4a4f55;left:13.30px;">457542</div>
</div>
<div class="a" style="left:107.00px;top:134px;width:107px;height:22px;overflow:hidden"><div class="t" style="top:7px;font-size:11.2px;color:#4a4f55;left:13.30px;">55754</div>
</div>
<div class="a" style="left:214.00px;top:134px;width:107px;height:22px;overflow:hidden"><div class="t" style="top:7px;font-size:11.2px;color:#4a4f55;left:13.30px;">765</div>
</div>
<div class="a" style="left:321.00px;top:134px;width:107px;height:22px;overflow:hidden"><div class="t" style="top:7px;font-size:11.2px;color:#4a4f55;left:13.30px;">2</div>
</div>
<div class="a" style="left:428.00px;top:134px;width:107px;height:22px;overflow:hidden"><div class="t" style="top:7px;font-size:11.2px;color:#4a4f55;left:13.30px;">12</div>
</div>
<div class="a" style="left:535.00px;top:134px;width:107px;height:22px;overflow:hidden"><div class="t" style="top:7px;font-size:11.2px;color:#4a4f55;left:13.30px;">20517</div>
</div>
<div class="a" style="left:642.00px;top:134px;width:107px;height:22px;overflow:hidden"><div class="t" style="top:7px;font-size:11.2px;color:#4a4f55;left:13.30px;">0.02</div>
</div>
<div class="a" style="left:749.00px;top:134px;width:107px;height:22px;overflow:hidden"><div class="t" style="top:7px;font-size:11.2px;color:#4a4f55;left:13.30px;">0</div>
</div>
<div class="a" style="left:856.00px;top:134px;width:107px;height:22px;overflow:hidden"><div class="t" style="top:7px;font-size:11.2px;color:#4a4f55;left:13.30px;">R</div>
</div>
<div class="a" style="left:963.00px;top:134px;width:107px;height:22px;overflow:hidden"><div class="t" style="top:7px;font-size:11.2px;color:#4a4f55;left:13.30px;">F</div>
</div>
<div class="a" style="left:1070.00px;top:134px;width:107px;height:22px;overflow:hidden"><div class="t" style="top:7px;font-size:11.2px;color:#4a4f55;left:13.30px;">1992-08-07</div>
</div>
<div class="a" style="left:1177.00px;top:134px;width:107px;height:22px;overflow:hidden"><div class="t" style="top:7px;font-size:11.2px;color:#4a4f55;left:13.30px;">1992-08-09</div>
</div>
<div class="a" style="left:1284.00px;top:134px;width:107px;height:22px;overflow:hidden"><div class="t" style="top:7px;font-size:11.2px;color:#4a4f55;left:13.30px;">1992-08-23</div>
</div>
<div class="a" style="left:1391.00px;top:134px;width:107px;height:22px;overflow:hidden"><div class="t" style="top:7px;font-size:11.2px;color:#4a4f55;left:13.30px;">TAKE BACK RETURN</div>
</div>
<div class="a" style="left:1498.00px;top:134px;width:107px;height:22px;overflow:hidden"><div class="t" style="top:7px;font-size:11.2px;color:#4a4f55;left:13.30px;">SHIP</div>
</div>
<div class="a" style="left:1605.00px;top:134px;width:107px;height:22px;overflow:hidden"><div class="t" style="top:7px;font-size:11.2px;color:#4a4f55;left:13.30px;">ys pending t</div>
</div>
<div class="a" style="left:0.00px;top:156px;width:107px;height:22px;overflow:hidden"><div class="t" style="top:7px;font-size:11.2px;color:#4a4f55;left:13.30px;">457542</div>
</div>
<div class="a" style="left:107.00px;top:156px;width:107px;height:22px;overflow:hidden"><div class="t" style="top:7px;font-size:11.2px;color:#4a4f55;left:13.30px;">56991</div>
</div>
<div class="a" style="left:214.00px;top:156px;width:107px;height:22px;overflow:hidden"><div class="t" style="top:7px;font-size:11.2px;color:#4a4f55;left:13.30px;">2002</div>
</div>
<div class="a" style="left:321.00px;top:156px;width:107px;height:22px;overflow:hidden"><div class="t" style="top:7px;font-size:11.2px;color:#4a4f55;left:13.30px;">3</div>
</div>
<div class="a" style="left:428.00px;top:156px;width:107px;height:22px;overflow:hidden"><div class="t" style="top:7px;font-size:11.2px;color:#4a4f55;left:13.30px;">11</div>
</div>
<div class="a" style="left:535.00px;top:156px;width:107px;height:22px;overflow:hidden"><div class="t" style="top:7px;font-size:11.2px;color:#4a4f55;left:13.30px;">21427.89</div>
</div>
<div class="a" style="left:642.00px;top:156px;width:107px;height:22px;overflow:hidden"><div class="t" style="top:7px;font-size:11.2px;color:#4a4f55;left:13.30px;">0.1</div>
</div>
<div class="a" style="left:749.00px;top:156px;width:107px;height:22px;overflow:hidden"><div class="t" style="top:7px;font-size:11.2px;color:#4a4f55;left:13.30px;">0.08</div>
</div>
<div class="a" style="left:856.00px;top:156px;width:107px;height:22px;overflow:hidden"><div class="t" style="top:7px;font-size:11.2px;color:#4a4f55;left:13.30px;">A</div>
</div>
<div class="a" style="left:963.00px;top:156px;width:107px;height:22px;overflow:hidden"><div class="t" style="top:7px;font-size:11.2px;color:#4a4f55;left:13.30px;">F</div>
</div>
<div class="a" style="left:1070.00px;top:156px;width:107px;height:22px;overflow:hidden"><div class="t" style="top:7px;font-size:11.2px;color:#4a4f55;left:13.30px;">1992-07-14</div>
</div>
<div class="a" style="left:1177.00px;top:156px;width:107px;height:22px;overflow:hidden"><div class="t" style="top:7px;font-size:11.2px;color:#4a4f55;left:13.30px;">1992-08-30</div>
</div>
<div class="a" style="left:1284.00px;top:156px;width:107px;height:22px;overflow:hidden"><div class="t" style="top:7px;font-size:11.2px;color:#4a4f55;left:13.30px;">1992-08-13</div>
</div>
<div class="a" style="left:1391.00px;top:156px;width:107px;height:22px;overflow:hidden"><div class="t" style="top:7px;font-size:11.2px;color:#4a4f55;left:13.30px;">TAKE BACK RETURN</div>
</div>
<div class="a" style="left:1498.00px;top:156px;width:107px;height:22px;overflow:hidden"><div class="t" style="top:7px;font-size:11.2px;color:#4a4f55;left:13.30px;">RAIL</div>
</div>
<div class="a" style="left:1605.00px;top:156px;width:107px;height:22px;overflow:hidden"><div class="t" style="top:7px;font-size:11.2px;color:#4a4f55;left:13.30px;">to beans sleep sl</div>
</div>
</div>
<div class="a" style="left:1739.50px;top:566.00px;width:19.00px;height:170.00px;background:#f1f1f1"></div>
<div class="a" style="left:1741.50px;top:585.40px;width:15.00px;height:101.60px;background:#c1c1c1"></div>
<svg class="a" style="left:1744px;top:572.5px" width="10" height="6" viewBox="0 0 10 6"><path d="M0 6 L5 0.5 L10 6 Z" fill="#a3a3a3"/></svg>
<svg class="a" style="left:1744px;top:723px" width="10" height="6" viewBox="0 0 10 6"><path d="M0 0 L5 5.5 L10 0 Z" fill="#505050"/></svg>
<div class="a" style="left:14.00px;top:741.00px;width:1745.50px;height:30.00px;background:linear-gradient(#ffffff 0px,#ffffff 23px,#fbfbfc 25px,#fbfbfc 100%)"></div>
<div class="a" style="left:832.20px;top:744.60px;width:32.80px;height:26.20px;background:#e2eefa;border-radius:3px 3px 0 0"></div>
<div class="t" style="top:757px;font-size:11.1px;color:#5a5f65;left:706.00px;">(1 of 10)</div>
<div class="t" style="top:755px;font-size:13.8px;color:#4a4f55;left:549.20px;width:600px;text-align:center;">1</div>
<div class="t" style="top:755px;font-size:13.8px;color:#4a4f55;left:586.20px;width:600px;text-align:center;">2</div>
<div class="t" style="top:755px;font-size:13.8px;color:#4a4f55;left:623.20px;width:600px;text-align:center;">3</div>
<div class="t" style="top:755px;font-size:13.8px;color:#4a4f55;left:660.20px;width:600px;text-align:center;">4</div>
<div class="t" style="top:755px;font-size:13.8px;color:#4a4f55;left:697.20px;width:600px;text-align:center;">5</div>
<svg class="a" style="left:769.3px;top:756.5px" width="7" height="10" viewBox="0 0 7 10"><path d="M5.8 0.8 L1.3 5 L5.8 9.2" fill="none" stroke="#8c9196" stroke-width="1.25"/></svg>
<svg class="a" style="left:775.0px;top:756.5px" width="7" height="10" viewBox="0 0 7 10"><path d="M5.8 0.8 L1.3 5 L5.8 9.2" fill="none" stroke="#8c9196" stroke-width="1.25"/></svg>
<svg class="a" style="left:808.8px;top:756.5px" width="7" height="10" viewBox="0 0 7 10"><path d="M5.8 0.8 L1.3 5 L5.8 9.2" fill="none" stroke="#8c9196" stroke-width="1.25"/></svg>
<svg class="a" style="left:1030.0px;top:756.5px" width="7" height="10" viewBox="0 0 7 10"><path d="M1.2 0.8 L5.7 5 L1.2 9.2" fill="none" stroke="#2c3640" stroke-width="1.25"/></svg>
<svg class="a" style="left:1064.4px;top:756.5px" width="7" height="10" viewBox="0 0 7 10"><path d="M1.2 0.8 L5.7 5 L1.2 9.2" fill="none" stroke="#2c3640" stroke-width="1.25"/></svg>
<svg class="a" style="left:1069.6px;top:756.5px" width="7" height="10" viewBox="0 0 7 10"><path d="M1.2 0.8 L5.7 5 L1.2 9.2" fill="none" stroke="#2c3640" stroke-width="1.25"/></svg>
</body></html>
